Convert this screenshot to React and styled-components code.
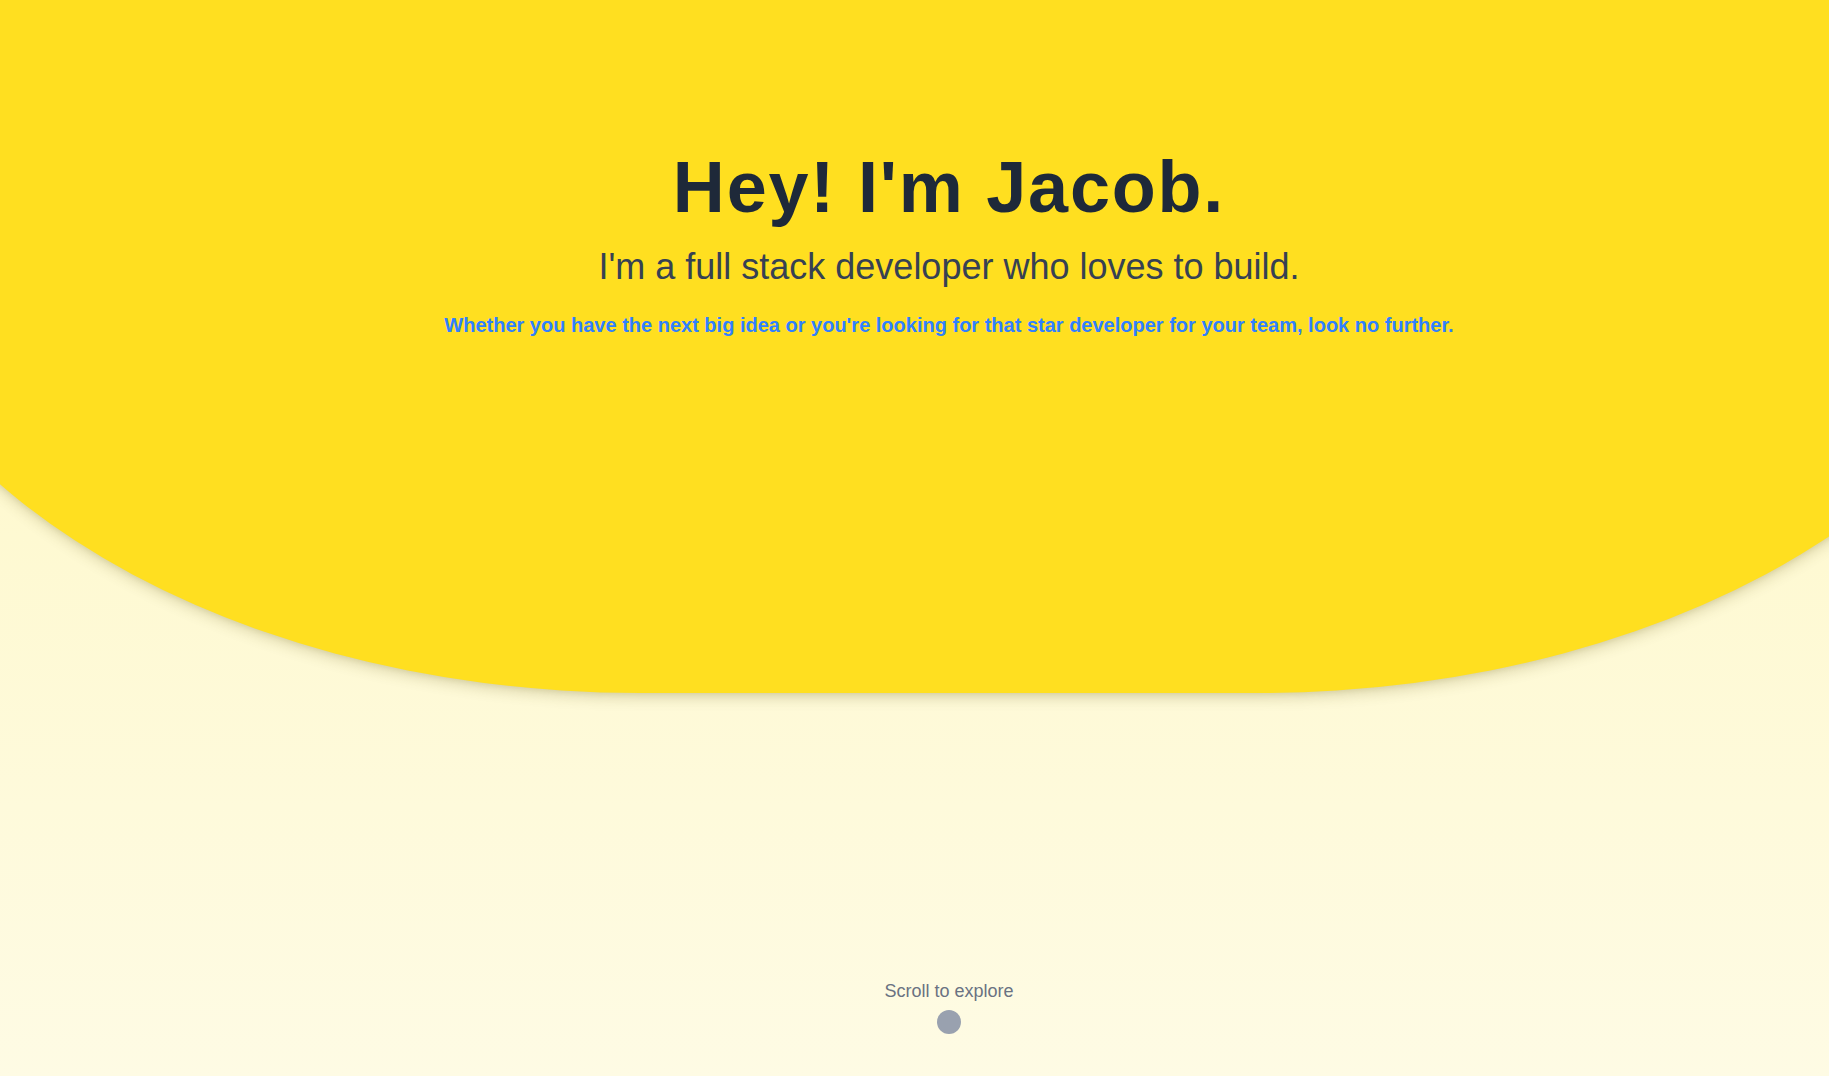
import React from 'react'
import styled, { createGlobalStyle } from 'styled-components'

const GlobalStyle = createGlobalStyle`
    html, body {
        margin: 0;
        padding: 0;
        overflow: hidden;
    }
    body {
        font-family: "Liberation Sans", Arial, sans-serif;
    }
`

function App() {
    return (
        <Page>
            <GlobalStyle />
            <Hero>
                <Title>Hey! I'm Jacob.</Title>
                <Subtitle>I'm a full stack developer who loves to build.</Subtitle>
                <Pitch>
                    Whether you have the next big idea or you're looking for that star developer for your team, look no further.
                </Pitch>
            </Hero>
            <ScrollHint>
                <HintText>Scroll to explore</HintText>
                <Dot />
            </ScrollHint>
        </Page>
    )
}

export default App

const Page = styled.div`
    width: 1898px;
    height: 1076px;
    overflow: hidden;
    display: flex;
    flex-direction: column;
    align-items: center;
    background: linear-gradient(to bottom, #fef7c0 0%, #fefbe4 100%);
`
const Hero = styled.section`
    flex: none;
    width: 2218px;
    height: 693px;
    box-sizing: border-box;
    padding-top: 151px;
    background-color: #ffdf20;
    border-bottom-left-radius: 800px 522px;
    border-bottom-right-radius: 800px 522px;
    box-shadow: 0 7px 14px -2px rgba(90, 80, 0, 0.2), 0 2px 4px rgba(90, 80, 0, 0.08);
    display: flex;
    flex-direction: column;
    align-items: center;
    text-align: center;
`
const Title = styled.h1`
    margin: 0;
    font-size: 72px;
    line-height: 72px;
    font-weight: 700;
    letter-spacing: 1.8px;
    color: #1e2939;
`
const Subtitle = styled.p`
    margin: 24px 0 0;
    font-size: 36px;
    line-height: 40px;
    color: #364153;
`
const Pitch = styled.p`
    margin: 24px 0 0;
    font-size: 20px;
    line-height: 28px;
    font-weight: 700;
    color: #3080ff;
`
const ScrollHint = styled.div`
    margin-top: auto;
    padding-bottom: 42px;
    display: flex;
    flex-direction: column;
    align-items: center;
    gap: 5px;
`
const HintText = styled.span`
    font-size: 18px;
    line-height: 28px;
    color: #6a7282;
`
const Dot = styled.span`
    width: 24px;
    height: 24px;
    border-radius: 50%;
    background-color: #99a1af;
`
